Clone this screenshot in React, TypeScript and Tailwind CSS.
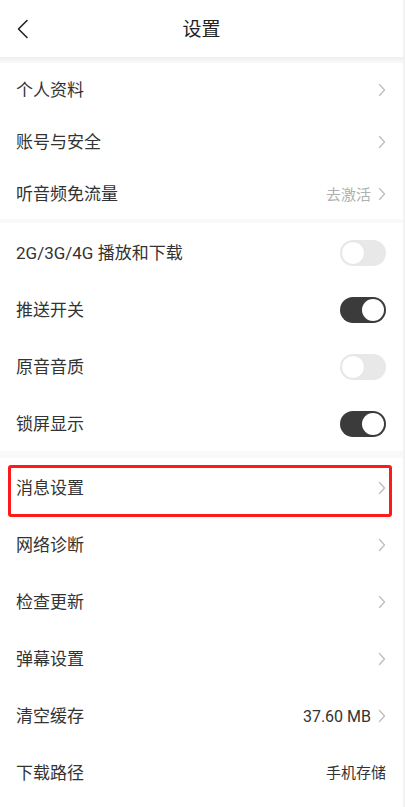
import { ReactNode } from 'react';

const font = { fontFamily: 'Roboto, "Noto Sans CJK SC", sans-serif' };

function Chevron() {
  return (
    <svg width="8" height="14" viewBox="0 0 8 14" fill="none" className="shrink-0">
      <path d="M1.5 1.5 L6.5 7 L1.5 12.5" stroke="#bdbdbd" strokeWidth="1.3" strokeLinecap="round" strokeLinejoin="round" />
    </svg>
  );
}

function Toggle({ on }: { on: boolean }) {
  return on ? (
    <div className="w-[46px] h-[26px] rounded-full bg-[#3b3b3b] flex items-center justify-end pr-[2px]">
      <div className="w-[22px] h-[22px] rounded-full bg-white" />
    </div>
  ) : (
    <div className="w-[46px] h-[26px] rounded-full bg-[#e8e8e8] flex items-center pl-[1px]">
      <div className="w-[24px] h-[24px] rounded-full bg-white border border-[#e4e4e4]" />
    </div>
  );
}

function Row({ label, h, right, highlight }: { label: string; h: string; right?: ReactNode; highlight?: boolean }) {
  return (
    <div className={`relative flex items-center justify-between pl-4 pr-[17px] ${h}`}>
      <span className="text-[17px] text-[#333] pt-[4px]">{label}</span>
      <div className="flex items-center gap-[7px] pt-[2px]">{right}</div>
      {highlight && (
        <div className="absolute left-[8px] right-[11px] top-[7px] h-[52px] border-[3px] border-[#ff1a1a] rounded-[3px]" />
      )}
    </div>
  );
}

export default function App() {
  return (
    <div className="w-[405px] h-[807px] bg-white overflow-hidden border-r-2 border-[#f2f2f2]" style={font}>
      <div className="relative h-[57px] flex items-center justify-center">
        <svg width="14" height="20" viewBox="0 0 14 20" fill="none" className="absolute left-[16px] top-[19px]">
          <path d="M11 1.5 L2.5 10 L11 18.5" stroke="#222" strokeWidth="1.6" strokeLinecap="round" strokeLinejoin="round" />
        </svg>
        <span className="text-[19px] text-[#222] pt-[3px]">设置</span>
      </div>
      <div className="h-[6px] bg-gradient-to-b from-[#efefef] to-[#fafafa]" />

      <Row label="个人资料" h="h-[52px]" right={<Chevron />} />
      <Row label="账号与安全" h="h-[52px]" right={<Chevron />} />
      <Row
        label="听音频免流量"
        h="h-[52px]"
        right={
          <>
            <span className="text-[15px] text-[#b0b0b0] pt-[2px]">去激活</span>
            <Chevron />
          </>
        }
      />
      <div className="h-[4px] bg-[#f9f9f9]" />

      <Row label="2G/3G/4G 播放和下载" h="h-[57px]" right={<Toggle on={false} />} />
      <Row label="推送开关" h="h-[57px]" right={<Toggle on />} />
      <Row label="原音音质" h="h-[57px]" right={<Toggle on={false} />} />
      <Row label="锁屏显示" h="h-[57px]" right={<Toggle on />} />
      <div className="h-[7px] bg-[#f9f9f9]" />

      <Row label="消息设置" h="h-[57px]" right={<Chevron />} highlight />
      <Row label="网络诊断" h="h-[57px]" right={<Chevron />} />
      <Row label="检查更新" h="h-[57px]" right={<Chevron />} />
      <Row label="弹幕设置" h="h-[57px]" right={<Chevron />} />
      <Row
        label="清空缓存"
        h="h-[57px]"
        right={
          <>
            <span className="text-[16px] text-[#333] pt-[2px]">37.60 MB</span>
            <Chevron />
          </>
        }
      />
      <Row label="下载路径" h="h-[57px]" right={<span className="text-[15px] text-[#333] pt-[2px]">手机存储</span>} />
    </div>
  );
}
